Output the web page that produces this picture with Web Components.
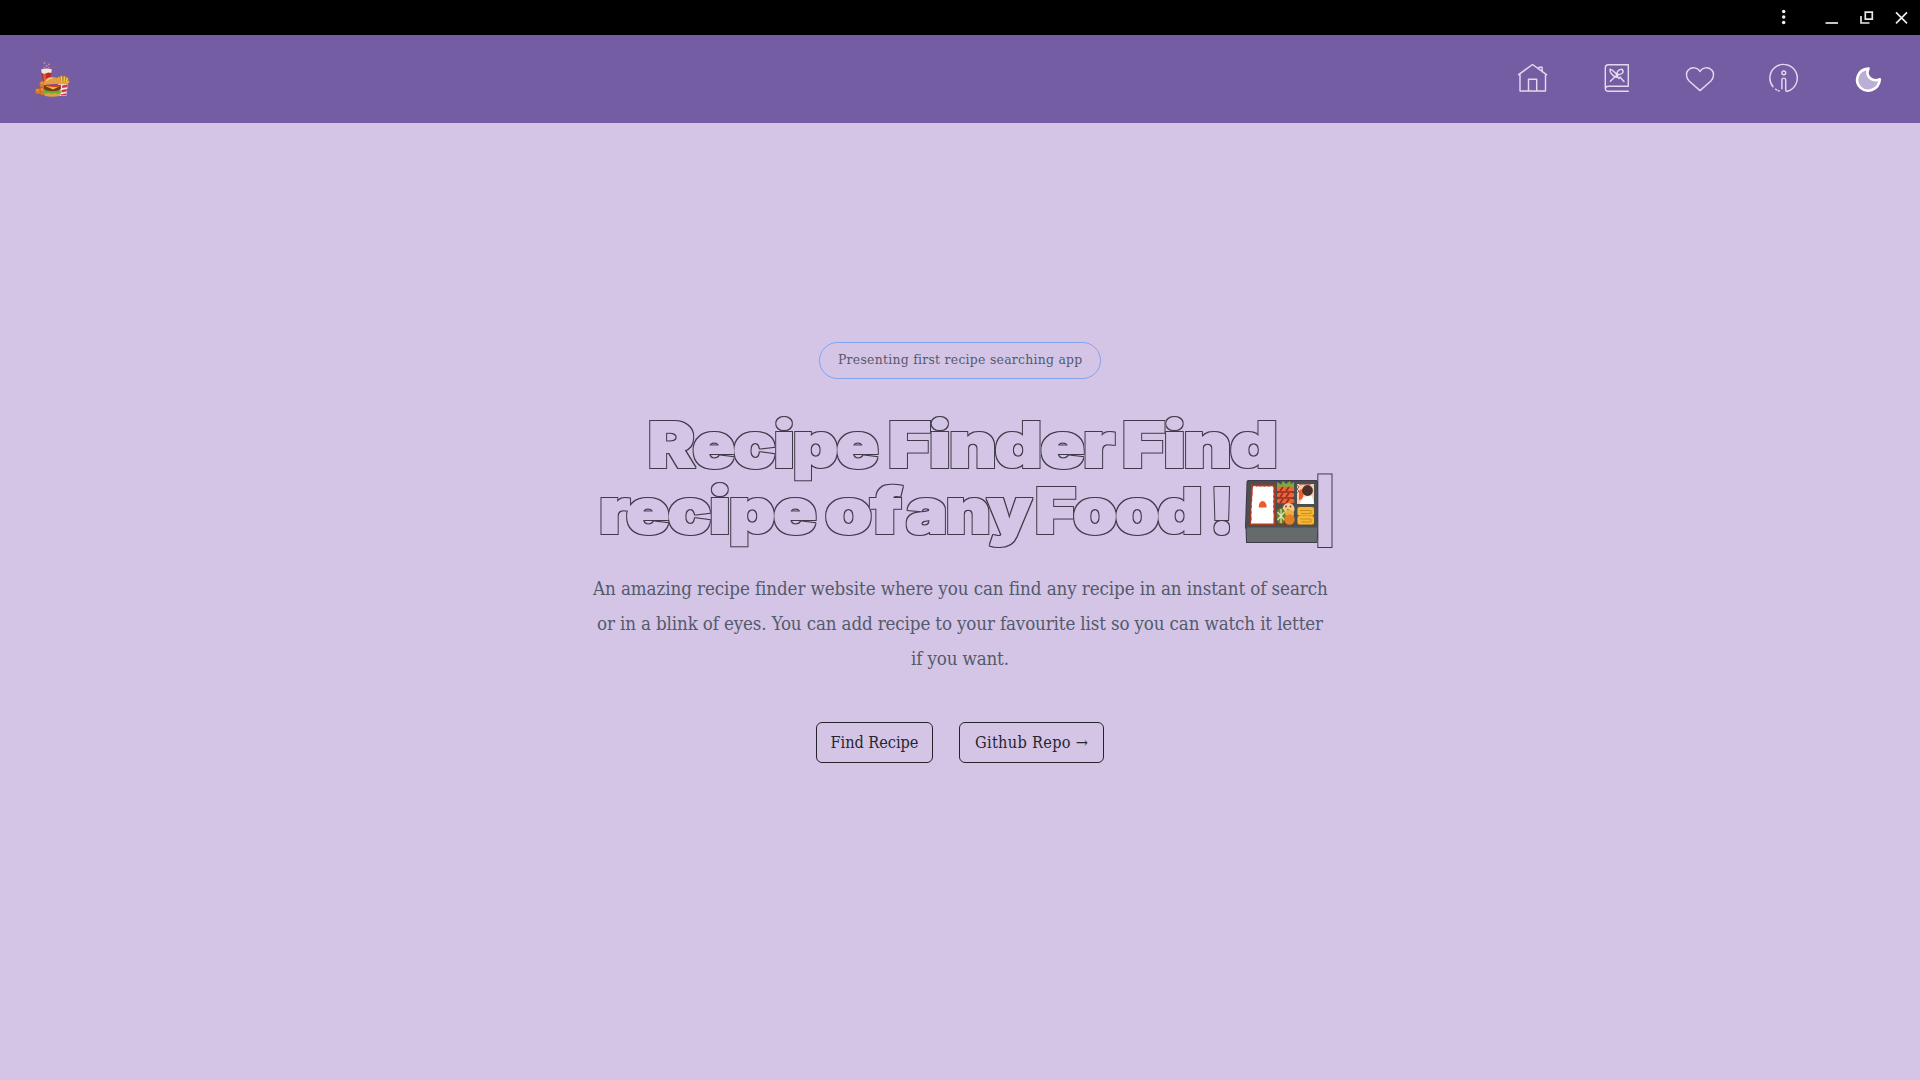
<!DOCTYPE html>
<html lang="en">
<head>
<meta charset="utf-8">
<title>Recipe Finder</title>
<style>
html,body{margin:0;height:100%;background:#d4c5e6;overflow:hidden}
</style>
</head>
<body>
<recipe-app></recipe-app>
<script>
const define = (name, html, after) => {
  const t = document.createElement('template');
  t.innerHTML = html;
  customElements.define(name, class extends HTMLElement {
    constructor() {
      super();
      this.attachShadow({mode: 'open'}).appendChild(t.content.cloneNode(true));
    }
    connectedCallback() { if (after) after(this); }
  });
};

// Spreads its text over the width given in the "w" attribute:
// by letter spacing, or by widening the letters when "stretch" is set
define('fit-text', `<style>
:host{display:block;white-space:nowrap;flex:none;text-align:left}
:host([stretch]){letter-spacing:-1.5px}
span{display:inline-block;transform-origin:0 50%}
</style><span><slot></slot></span>`, el => {
  const w = +el.getAttribute('w');
  const span = el.shadowRoot.querySelector('span');
  el.style.width = w + 'px';
  if (el.hasAttribute('stretch')) {
    span.style.transform = 'scaleX(' + (w / span.getBoundingClientRect().width).toFixed(4) + ')';
    return;
  }
  el.style.letterSpacing = '0px';
  const n = [...el.textContent].length;
  const nat = span.getBoundingClientRect().width;
  if (n > 1) el.style.letterSpacing = ((w - nat) / (n - 1)).toFixed(3) + 'px';
});

define('window-bar', `<style>
:host{display:flex;height:35px;background:#000;justify-content:flex-end;align-items:flex-start;flex:none}
svg{display:block}
</style>
<svg width="180" height="34" viewBox="1740 0 180 34" fill="none" stroke="#e8e8e8" stroke-width="1.7">
<g fill="#f2f2f2" stroke="none"><circle cx="1783.7" cy="11.4" r="1.75"/><circle cx="1783.7" cy="17" r="1.75"/><circle cx="1783.7" cy="22.5" r="1.75"/></g>
<path d="M1825.5 23h12.5"/><path d="M1865.3 12.2h7v7h-7z"/><path d="M1861 16v7h8.5"/>
<path d="M1896 12.3l11 11M1907 12.3l-11 11"/></svg>`);

define('app-logo', `<style>:host{display:block}svg{display:block}</style>
<svg width="36" height="38" viewBox="34.500 59 36 38">
<g fill="#c98a9c"><circle cx="45" cy="63" r="1"/><circle cx="49.5" cy="64.3" r=".9"/><circle cx="47" cy="66" r="1"/><circle cx="44.7" cy="67.5" r=".8"/><circle cx="49" cy="67.4" r=".7"/></g>
<path d="M50 71l2-3.4 5-.8" fill="none" stroke="#b8506b" stroke-width="1.2"/>
<path d="M42 70h10l-1.4 14h-7z" fill="#b92e24"/><path d="M43.5 73l.8 9h2.2l-.4-9z" fill="#de5c3c"/>
<path d="M41.6 69.5q5.4-2 10.800 0l-.6 3.600q-2.400-1-4.600 0-2.500 1.200-4.900-.2z" fill="#f3e6df"/>
<g stroke="#c98413" stroke-width=".5" fill="#f6cf45"><path d="M58 78l1.500-1.500 3 9h-3zM60.700 76.500l2-.7.9 10h-2.200zM64 76.400l2-.3-1 10h-1.700zM66.900 77.500l2 .6-3 9-1.500-.8zM68.500 80.500l1.500 1-4.500 6-1-1z"/></g>
<path d="M58.500 84l9.800.5-1.600 11.500h-7.500z" fill="#f5e9ec"/>
<path d="M62.500 85.500l5.700-1-.5 2.700-5 .8zM62 90l5.600-1-.5 2.500-5 1zM61 94.500l5.700-1.300-.3 2.400h-5z" fill="#d43350"/>
<g fill="#d57a35" stroke="#a9561f" stroke-width=".4"><rect x="40" y="81" width="6.500" height="7" rx="2.400"/><rect x="39.500" y="87.500" width="6.500" height="7.500" rx="2.400"/><rect x="35.500" y="88.500" width="6" height="5.500" rx="2.300"/></g>
<g fill="#f09445"><circle cx="42.500" cy="83" r="1.200"/><circle cx="38" cy="90" r="1.100"/><circle cx="42.500" cy="89.700" r="1.100"/></g>
<path d="M44.400 92.500h17l-.7 3.200q-7.700 2.300-15.700 0z" fill="#dfa048"/>
<path d="M44 90.300h17.500l-.3 2.700-3 .9-3-.9-3 1-3-1-2.700.8-2.300-.8z" fill="#68b22a"/>
<path d="M44.400 85.300h17v3.200q-1 2.800-8.500 2.800t-8.500-2.800z" fill="#7a3a18"/>
<path d="M46 86l7.500 3.500L60.500 86z" fill="#f7bd2c"/><path d="M44.500 84.700h16.800v1.800l-6 .5-6-.4z" fill="#cf3628"/>
<path d="M44.300 85q.1-8 8.600-8t8.700 6.700l-8 .3z" fill="#e89a42"/><path d="M47 81q2-3 6-2.800" fill="none" stroke="#f8c77f" stroke-width="1.300"/>
</svg>`);

define('nav-icon', `<style>:host{display:block;width:32px;height:32px}svg{display:none;overflow:visible}
:host([name=home]) .home,:host([name=book]) .book,:host([name=heart]) .heart,:host([name=info]) .info,:host([name=moon]) .moon{display:block}</style>
<svg class="home" width="32" height="32" viewBox="1516 62 32 32" fill="none" stroke="#e3d9ef" stroke-width="1.450" stroke-linejoin="round" stroke-linecap="round"><path d="M1518.600 74.700l13.900-10.200 14 10.200M1520 74v17h25.500V74M1528.500 91V79.300h8.200V91M1538.700 68.700l.4-1.500h3v4.500"/></svg>
<svg class="book" width="32" height="32" viewBox="1600 62 32 32" fill="none" stroke="#e3d9ef" stroke-width="1.450" stroke-linejoin="round" stroke-linecap="round"><path d="M1628.300 86.200V64.700h-19.800q-3.200 0-3.200 3.200v20q0 3.400 3.200 3.400h19.800M1628.300 86.200h-19.800q-3.200 0-3.200 2.500"/>
<path d="M1610.300 81.300l7.200-6.800M1617.500 74.500c-1.300-2.400.9-5.200 4.800-5.200 1.900 2.800-.1 5.600-4.800 5.200zM1610 69.300c2.700.2 4.700 3 7.800 6.500l-1.200 1.400c-3.600-1.200-6.700-4.200-6.600-7.900zM1617 76.500l2 2 1.500-1.300M1620 77l4 4.400"/></svg>
<svg class="heart" width="32" height="32" viewBox="1684 62 32 32" fill="none" stroke="#e3d9ef" stroke-width="1.450" stroke-linejoin="round"><path d="M1700 90.600l-10.600-9.400c-4-4-3.500-9-1-11.300 3.300-3.200 9.300-2.700 11.600 1.600 2.300-4.300 8.300-4.800 11.600-1.600 2.500 2.300 3 7.300-1 11.300z"/></svg>
<svg class="info" width="32" height="32" viewBox="1767.700 61.500 32 32" fill="none" stroke="#e3d9ef" stroke-width="1.450" stroke-linecap="round"><path d="M1772.700 86.300a13.700 13.700 0 1 1 14.600 4.400q-1.900.5-1.900-1.500V79.500q0-1.900-1.900-1.900t-1.900 1.900v8.700M1775.300 88.700l1.300.8M1778.300 90.300l.6.200"/><circle cx="1783.500" cy="72.300" r="1.900"/></svg>
<svg class="moon" width="32" height="32" viewBox="1852 62 32 32"><path d="M1868.500 68.600c-12 .9-14.200 13.500-7.800 19.300 6.500 5.800 18.200 2.200 19.200-8.700-7 3.400-15.200-2.600-11.400-10.600z" fill="#b9aed6" stroke="#fff" stroke-width="2.600" stroke-linejoin="round"/></svg>`);

define('nav-bar', `<style>
:host{display:flex;align-items:center;justify-content:space-between;box-sizing:border-box;height:88px;padding:0 36px 2px 34px;background:#745da3;flex:none}
nav{display:flex;gap:52px;align-items:center}
</style><app-logo></app-logo><nav><nav-icon name="home"></nav-icon><nav-icon name="book"></nav-icon><nav-icon name="heart"></nav-icon><nav-icon name="info"></nav-icon><nav-icon name="moon"></nav-icon></nav>`);

define('intro-pill', `<style>
:host{display:flex;box-sizing:border-box;width:282px;height:37px;border:1.400px solid #82a2ee;border-radius:19px;justify-content:center;align-items:flex-start;font-size:13.800px;line-height:33px;color:#535a6b}
</style><slot></slot>`);

define('bento-box', `<style>:host{display:block;width:72px;height:62px;flex:none}svg{display:block}</style>
<svg width="72" height="62" viewBox="0 0 72 62">
<path d="M.5 44h71l-.8 17H1z" fill="#656b6c"/><path d="M3.500 0h66q1.500 0 1.600 2l.9 44.500H0L1.500 2Q1.600 0 3.500 0z" fill="#4b4f50"/>
<path d="M5 3.500h24.500V44H4z" fill="#b13a22"/>
<path d="M7 5.500q2-1 3.500.3 2-1.200 4 0 2-1.200 4 0 2-1.200 4 0 2-1.100 4.500-.2 1 2.500 0 5 1.200 2.500 0 5 1.200 2.500 0 5 1.200 2.500 0 5 1.200 2.500 0 5 1 3 .5 6.500v5.500H4.800l1-5q-1-3 0-6-1-3 .2-6-.8-3 .3-6-.5-3 .4-6-.2-4 .3-8z" fill="#fff"/>
<path d="M12.800 26.500q0-6.500 3.800-6.500t4 6.500z" fill="#f15a24"/>
<path d="M31 3h17v20H31z" fill="#8c3220"/><path d="M31 10V1l4 2.500L37 0l3 3 4-3 1 3 3-2v9z" fill="#7aab3d"/>
<g stroke="#e8673c" stroke-width="4.500" stroke-linecap="round"><path d="M33 8h13M33 14h13M33 20h13"/></g><g stroke="#a9271b" stroke-width="1.700"><path d="M34 10l3-4M40 10l3-4M34 16l3-4M40 16l3-4M34 22l3-4M40 22l3-4"/></g>
<path d="M51 3h17v20H51z" fill="#f7cdb2"/><path d="M51 4l2 2-2 2 2 2-2 2M53 3l2 1 2-1 2 1 2-1 2 1 2-1" stroke="#9c4938" fill="none" stroke-width=".8"/>
<path d="M53 10q2-3 5-1l-1 9-4 1z" fill="#ef5b27"/><circle cx="61.500" cy="9.500" r="5.400" fill="#4a2f2b"/><path d="M54 22l3-6q5-1 9-1l2 8H54z" fill="#fff"/>
<path d="M31 27h17v17H31z" fill="#74442a"/><circle cx="42.500" cy="28" r="6" fill="#f6cb8d"/><g fill="#74442a"><circle cx="40" cy="25.500" r=".9"/><circle cx="44.500" cy="25.500" r=".9"/><circle cx="42" cy="29" r=".9"/></g>
<circle cx="43.500" cy="33" r="4.500" fill="#efae42"/><ellipse cx="35" cy="35" rx="4.500" ry="8" fill="#65852c"/><path d="M35 28v14M31.500 31l7 8M38.500 31l-7 8" stroke="#e1e5ae" stroke-width="1.200"/><circle cx="43.500" cy="38.500" r="5.200" fill="#e57f26"/>
<path d="M51 25.500h17.500V44H51z" fill="#7a5523"/><rect x="51.500" y="26" width="16.500" height="8.800" rx="2" fill="#f6b737"/><rect x="51.500" y="35" width="16.500" height="8.500" rx="2" fill="#f6b737"/>
<path d="M54 29.500h11v3H55M54 38h11v3H55" stroke="#ce8b20" fill="none"/></svg>`);

// A line of the title: thick letters in the page colour, with a thin dark edge round them
define('title-row', `<style>
:host{display:block;height:66px}
svg{position:absolute;width:0;height:0}
div{display:flex;height:66px;filter:url(#edge)}
</style>
<svg><filter id="edge" x="-5%" y="-25%" width="110%" height="150%" color-interpolation-filters="sRGB"><feMorphology in="SourceAlpha" operator="dilate" radius="1" result="d"/><feFlood flood-color="#3f3b4a"/><feComposite in2="d" operator="in"/><feMerge><feMergeNode/><feMergeNode in="SourceGraphic"/></feMerge></filter></svg>
<div><slot></slot></div>`);

define('outline-title', `<style>
:host{display:flex;flex-direction:column;width:732px;height:132px;font:900 62px/66px Inter,"Liberation Sans",sans-serif;color:#d4c5e6;-webkit-text-stroke:1.800px #d4c5e6;paint-order:stroke fill}
</style><slot></slot>`);

define('app-button', `<style>
:host{display:flex;box-sizing:border-box;height:41px;border:1.200px solid #25232c;border-radius:6px;justify-content:center;align-items:center;font-size:16.200px;line-height:39px;color:#25252f}
</style><slot></slot>`);

define('hero-section', `<style>
:host{display:flex;flex-direction:column;align-items:center;flex:1;padding-top:219px;font-family:"DejaVu Serif Condensed","DejaVu Serif",serif;font-stretch:condensed}
outline-title{margin-top:33px}
.copy{display:flex;flex-direction:column;align-items:center;margin-top:27px;font-size:18.600px;line-height:35px;color:#535a6b}
.actions{display:flex;gap:26px;margin-top:46px}
</style>
<intro-pill><fit-text w="244">Presenting first recipe searching app</fit-text></intro-pill>
<outline-title>
<title-row><fit-text stretch w="229" style="margin-left:54px">Recipe</fit-text><fit-text stretch w="225" style="margin-left:11px">Finder</fit-text><fit-text stretch w="154" style="margin-left:9px">Find</fit-text></title-row>
<title-row><fit-text stretch w="216" style="margin-left:5px">recipe</fit-text><fit-text stretch w="75" style="margin-left:10px">of</fit-text><fit-text stretch w="124" style="margin-left:6px">any</fit-text><fit-text stretch w="166" style="margin-left:5px">Food</fit-text><fit-text stretch w="22" style="margin-left:9px">!</fit-text><bento-box style="margin:3px 0 0 14px"></bento-box><fit-text w="14" style="font-size:59px;margin-left:-5px">|</fit-text></title-row>
</outline-title>
<div class="copy"><fit-text w="734">An amazing recipe finder website where you can find any recipe in an instant of search</fit-text><fit-text w="726">or in a blink of eyes. You can add recipe to your favourite list so you can watch it letter</fit-text><fit-text w="98">if you want.</fit-text></div>
<div class="actions"><app-button style="width:117px"><fit-text w="88">Find Recipe</fit-text></app-button><app-button style="width:145px"><fit-text w="113">Github Repo →</fit-text></app-button></div>`);

define('recipe-app', `<style>:host{display:flex;flex-direction:column;width:1920px;height:1080px;background:#d4c5e6}</style>
<window-bar></window-bar><nav-bar></nav-bar><hero-section></hero-section>`);
</script>
</body>
</html>
